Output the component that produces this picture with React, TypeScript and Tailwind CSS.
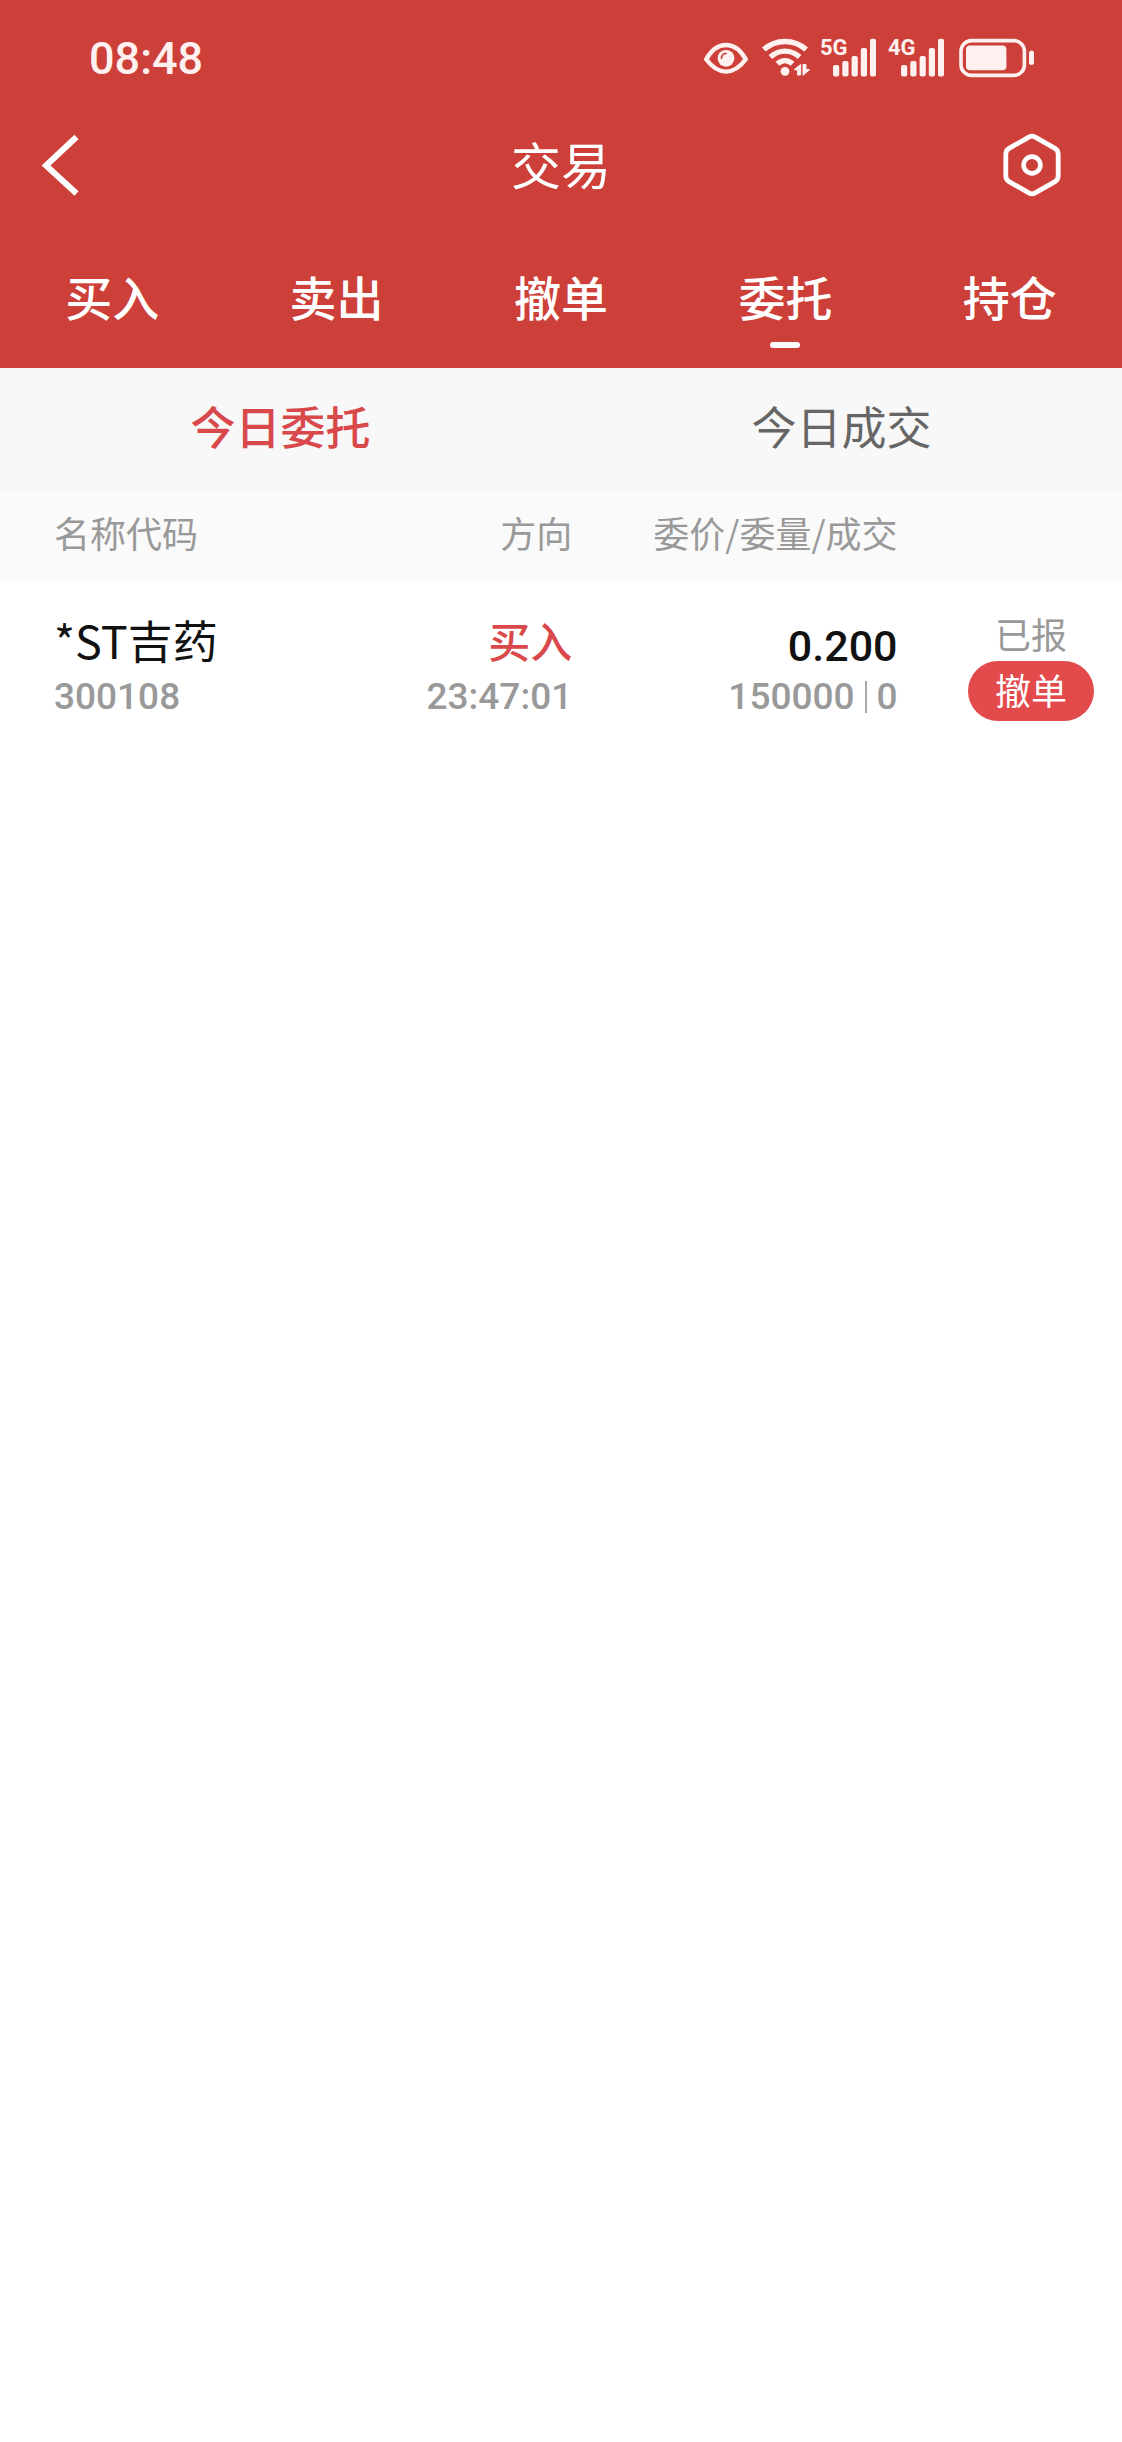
import clsx from "clsx";
import { FC } from "react";

type Order = {
  name: string;
  code: string;
  direction: string;
  time: string;
  price: string;
  quantity: number;
  filled: number;
  status: string;
};

const TABS = ["买入", "卖出", "撤单", "委托", "持仓"];
const ACTIVE_TAB = "委托";

const SUB_TABS = ["今日委托", "今日成交"];
const ACTIVE_SUB_TAB = "今日委托";

const ORDERS: Order[] = [
  {
    name: "*ST吉药",
    code: "300108",
    direction: "买入",
    time: "23:47:01",
    price: "0.200",
    quantity: 150000,
    filled: 0,
    status: "已报",
  },
];

const EyeIcon: FC = () => (
  <svg width="46" height="40" viewBox="0 0 46 40" fill="none" aria-hidden>
    <path
      d="M2.2 20.5C7 12 14 6.2 22 6.2S37 12 41.8 20.5C37 27 30 32.8 22 32.8S7 27 2.2 20.5Z"
      stroke="currentColor"
      strokeWidth="4.4"
      strokeLinejoin="round"
      transform="translate(0 .8)"
    />
    <circle cx="22" cy="20.3" r="8.4" fill="currentColor" />
    <path
      d="M17.5 20a4.8 4.8 0 0 1 4.5-4.7"
      stroke="#cd4039"
      strokeWidth="1.8"
      strokeLinecap="round"
    />
  </svg>
);

const WifiIcon: FC = () => (
  <svg
    className="overflow-visible"
    width="46"
    height="40"
    viewBox="0 0 46 40"
    fill="none"
    aria-hidden
  >
    <g stroke="currentColor" strokeWidth="5.4">
      <path d="M1.8 11.6C14 .8 32 .8 44.2 11.6" />
      <path d="M8.4 19C17 11.2 29 11.2 37.6 19" />
      <path d="M15.4 25.8C20 21.6 26 21.6 30.6 25.8" />
    </g>
    <circle cx="23" cy="33.3" r="4.4" fill="currentColor" />
    <path
      d="M38.6 26.5V37h-3v-5.2h-3.6zM41 37.2V26.5h3v5h3.9z"
      fill="currentColor"
      stroke="currentColor"
      strokeLinejoin="round"
    />
  </svg>
);

const SignalIcon: FC<{ label: string }> = ({ label }) => (
  <div className="relative">
    <span className="absolute top-0 left-0 text-[22px] leading-5 font-bold">
      {label}
    </span>
    <svg
      width="56"
      height="40"
      viewBox="0 0 56 40"
      fill="currentColor"
      aria-hidden
    >
      <rect x="13" y="27" width="6.2" height="11.5" rx="2" />
      <rect x="22.3" y="23" width="6.2" height="15.5" rx="2" />
      <rect x="31.6" y="18" width="6.2" height="20.5" rx="2" />
      <rect x="40.8" y="10" width="6.2" height="28.5" rx="2" />
      <rect x="50" y="0.8" width="6" height="37.7" rx="2" />
    </svg>
  </div>
);

const BatteryIcon: FC = () => (
  <svg width="78" height="40" viewBox="0 0 78 40" fill="none" aria-hidden>
    <rect
      x="5"
      y="2.6"
      width="63.4"
      height="34.8"
      rx="10.5"
      stroke="currentColor"
      strokeWidth="3.6"
    />
    <rect x="10" y="7.6" width="40.4" height="24.6" rx="4" fill="currentColor" />
    <rect x="73" y="12.4" width="5" height="14.6" rx="2.5" fill="currentColor" />
  </svg>
);

const StatusBar: FC = () => (
  <div className="flex h-29 items-center justify-between pr-[88px] pl-[89px] font-[Roboto,sans-serif] text-[#fff1f0]">
    <time className="text-[45px] leading-none font-medium">08:48</time>
    <div className="flex items-center gap-3">
      <EyeIcon />
      <WifiIcon />
      <SignalIcon label="5G" />
      <SignalIcon label="4G" />
      <BatteryIcon />
    </div>
  </div>
);

const TitleBar: FC = () => (
  <div className="grid h-25 grid-cols-3 items-center px-10 pb-0.5">
    <button className="justify-self-start" aria-label="返回">
      <svg width="40" height="62" viewBox="0 0 40 62" fill="none" aria-hidden>
        <path d="M36.5 3 6 31.5 36.5 59.5" stroke="currentColor" strokeWidth="6" />
      </svg>
    </button>
    <h1 className="pb-1 text-center text-[50px] leading-none">交易</h1>
    <button className="justify-self-end pr-[19px]" aria-label="设置">
      <svg width="62" height="64" viewBox="0 0 62 64" fill="none" aria-hidden>
        <path
          d="M27.8 4.1a6.4 6.4 0 0 1 6.4 0L54 15.4a6.4 6.4 0 0 1 3.2 5.6v22a6.4 6.4 0 0 1-3.2 5.6L34.2 59.9a6.4 6.4 0 0 1-6.4 0L8 48.6A6.4 6.4 0 0 1 4.8 43V21A6.4 6.4 0 0 1 8 15.4Z"
          stroke="currentColor"
          strokeWidth="4.8"
        />
        <circle cx="31" cy="32" r="8.4" stroke="currentColor" strokeWidth="4.6" />
      </svg>
    </button>
  </div>
);

const MainTabs: FC = () => (
  <nav className="grid h-38 grid-cols-5">
    {TABS.map((tab) => (
      <button
        key={tab}
        className="flex flex-col items-center pt-[46px] text-[47px] leading-[68px] font-medium"
        aria-current={tab === ACTIVE_TAB ? "page" : undefined}
      >
        {tab}
        {tab === ACTIVE_TAB && (
          <span className="mt-3 h-1.5 w-[30px] rounded-full bg-white" />
        )}
      </button>
    ))}
  </nav>
);

const SubTabs: FC = () => (
  <div className="grid h-31 grid-cols-2 bg-[#f8f8f8] text-[45px]">
    {SUB_TABS.map((tab) => (
      <button
        key={tab}
        className={clsx(
          "pb-2",
          tab === ACTIVE_SUB_TAB
            ? "font-medium text-[#d9494b]"
            : "text-[#666666]",
        )}
      >
        {tab}
      </button>
    ))}
  </div>
);

const OrderRow: FC<{ order: Order }> = ({ order }) => (
  <tr className="align-top text-[#999999]">
    <td className="pt-7 pl-[54px]">
      <div className="text-[45px] leading-[62px] text-[#111111]">
        {order.name}
      </div>
      <div className="font-[Roboto,sans-serif] text-[37px] leading-[52px] font-medium">
        {order.code}
      </div>
    </td>
    <td className="pt-7 text-right">
      <div className="text-[42px] leading-[62px] font-medium text-[#d9494b]">
        {order.direction}
      </div>
      <div className="font-[Roboto,sans-serif] text-[37px] leading-[52px] font-medium">
        {order.time}
      </div>
    </td>
    <td className="pt-7 text-right font-[Roboto,sans-serif] font-medium">
      <div className="pt-3 text-[43px] leading-[50px] text-[#111111]">
        {order.price}
      </div>
      <div className="flex items-center justify-end text-[37px] leading-[52px]">
        {order.quantity}
        <span className="mx-2.5 h-8 w-0.5 bg-[#aaaaaa]" />
        {order.filled}
      </div>
    </td>
    <td className="pt-7 pr-7 text-right">
      <div className="inline-flex w-[126px] flex-col items-center gap-1 text-[36px]">
        <span className="leading-12">{order.status}</span>
        <button className="h-15 w-full rounded-full bg-[#e24a4c] pb-1 leading-14 text-white">
          撤单
        </button>
      </div>
    </td>
  </tr>
);

const OrderTable: FC = () => (
  <table className="w-full table-fixed">
    <colgroup>
      <col className="w-[30%]" />
      <col className="w-[21%]" />
      <col className="w-[29%]" />
      <col className="w-[20%]" />
    </colgroup>
    <thead className="bg-[#fafafa] text-[36px] leading-20 text-[#999999]">
      <tr>
        <th className="pb-[9px] pl-[54px] text-left font-normal">名称代码</th>
        <th className="pb-[9px] text-right font-normal">方向</th>
        <th className="pb-[9px] text-right font-normal whitespace-nowrap">
          委价/委量/成交
        </th>
        <th aria-label="状态" />
      </tr>
    </thead>
    <tbody>
      {ORDERS.map((order) => (
        <OrderRow key={order.code} order={order} />
      ))}
    </tbody>
  </table>
);

const App: FC = () => (
  <div className="min-h-screen bg-white font-['Noto_Sans_CJK_SC',sans-serif]">
    <header className="bg-[#cd4039] text-white">
      <StatusBar />
      <TitleBar />
      <MainTabs />
    </header>
    <main>
      <SubTabs />
      <OrderTable />
    </main>
  </div>
);

export default App;
